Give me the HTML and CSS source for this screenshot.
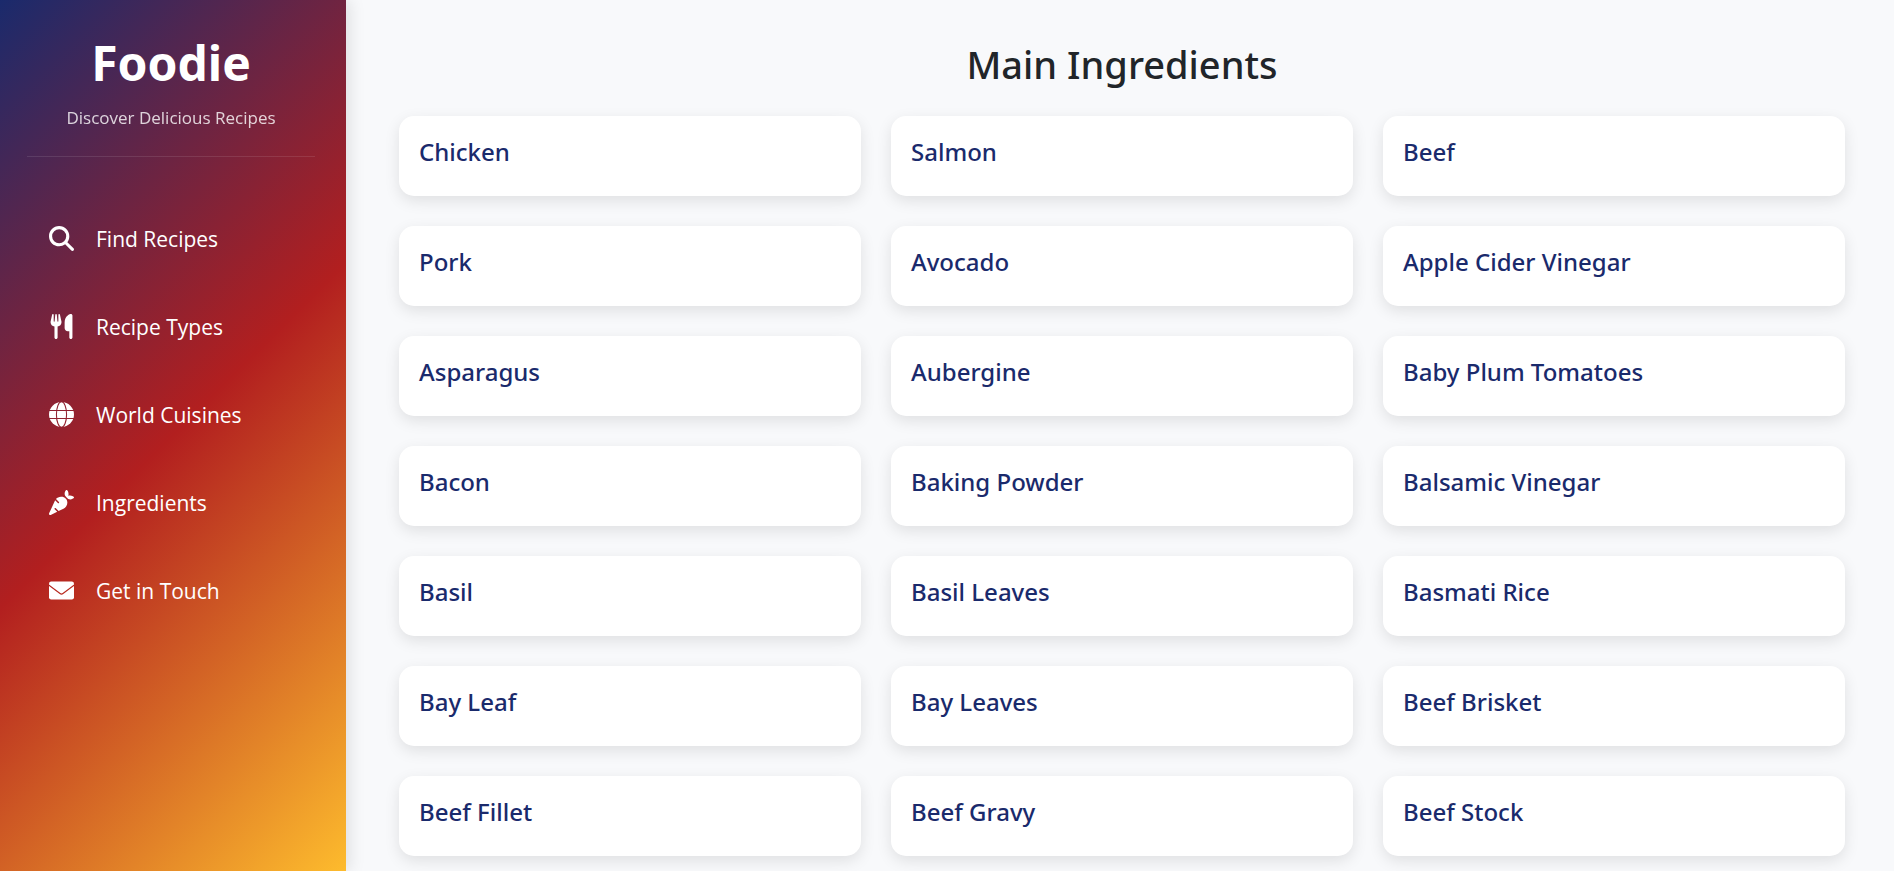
FILE: index.html
```
<!DOCTYPE html>
<html lang="en">
<head>
    <meta charset="UTF-8">
    <meta name="viewport" content="width=device-width, initial-scale=1.0">
    <title>Foodie</title>
    <link rel="stylesheet" href="styles.css">
</head>
<body>
    <aside class="sidebar">
        <div class="sidebar-header">
            <h1>Foodie</h1>
            <p>Discover Delicious Recipes</p>
        </div>
        <nav class="sidebar-nav">
            <a href="#search">
                <svg class="icon" viewBox="0 0 512 512" aria-hidden="true"><path d="M416 208c0 45.9-14.9 88.3-40 122.7L502.6 457.4c12.5 12.5 12.5 32.8 0 45.3s-32.8 12.5-45.3 0L330.7 376c-34.4 25.2-76.8 40-122.7 40C93.1 416 0 322.9 0 208S93.1 0 208 0S416 93.1 416 208zM208 352a144 144 0 1 0 0-288 144 144 0 1 0 0 288z"/></svg>
                <span>Find Recipes</span>
            </a>
            <a href="#categories">
                <svg class="icon" viewBox="0 0 448 512" aria-hidden="true"><path d="M416 0C400 0 288 32 288 176V288c0 35.3 28.7 64 64 64h32V480c0 17.7 14.3 32 32 32s32-14.3 32-32V352 240 32c0-17.7-14.3-32-32-32zM64 16C64 7.8 57.9 1 49.7 .1S34.2 4.6 32.4 12.5L2.1 148.8C.7 155.1 0 161.5 0 167.9c0 45.9 35.1 83.6 80 87.7V480c0 17.7 14.3 32 32 32s32-14.3 32-32V255.6c44.9-4.1 80-41.8 80-87.7c0-6.4-.7-12.8-2.1-19.1L191.6 12.5c-1.8-8-9.3-13.3-17.4-12.4S160 7.8 160 16V150.2c0 5.4-4.4 9.8-9.8 9.8c-5.1 0-9.3-3.9-9.8-9L127.9 14.6C127.2 6.3 120.3 0 112 0s-15.2 6.3-15.9 14.6L83.7 151c-.5 5.1-4.7 9-9.8 9c-5.4 0-9.8-4.4-9.8-9.8V16z"/></svg>
                <span>Recipe Types</span>
            </a>
            <a href="#area">
                <svg class="icon" viewBox="0 0 512 512" aria-hidden="true">
                    <mask id="globe-lines">
                        <rect width="512" height="512" fill="white"/>
                        <g fill="none" stroke="black" stroke-width="22">
                            <path d="M0 174H512M0 338H512"/>
                            <ellipse cx="256" cy="256" rx="104" ry="262"/>
                        </g>
                    </mask>
                    <circle cx="256" cy="256" r="256" mask="url(#globe-lines)"/>
                </svg>
                <span>World Cuisines</span>
            </a>
            <a href="#ingredients">
                <svg class="icon" viewBox="0 0 512 512" aria-hidden="true"><path d="M346.7 6C337.6 17 320 42.3 320 72c0 40 15.3 55.3 40 80s40 40 80 40c29.7 0 55-17.6 66-26.7c4-3.3 6-8.2 6-13.3s-2-10-6-13.2c-11.4-9.1-38.3-26.8-74-26.8c-32 0-40 8-40 8s8-8 8-40c0-35.7-17.7-62.6-26.8-74C370 2 365.1 0 360 0s-10 2-13.3 6zM244.6 136c-40 0-77.1 18.1-101.7 48.2l60.5 60.5c6.2 6.2 6.2 16.4 0 22.6s-16.4 6.2-22.6 0l-55.3-55.3 0 .1L2.2 477.9C-2 487-.1 497.8 7 505s17.9 9 27.1 4.8l134.7-62.4-52.1-52.1c-6.2-6.2-6.2-16.4 0-22.6s16.4-6.2 22.6 0l57.1 57.1 100.4-46.5C342.9 361.9 376 311.3 376 255.4c0-66-53.5-119.4-119.4-119.4h-12z"/></svg>
                <span>Ingredients</span>
            </a>
            <a href="#contact">
                <svg class="icon" viewBox="0 0 512 512" aria-hidden="true">
                    <mask id="envelope-flap">
                        <rect width="512" height="512" fill="white"/>
                        <path d="M-10 142L226 318Q256 340 286 318L522 142" fill="none" stroke="black" stroke-width="24"/>
                    </mask>
                    <rect y="70" width="512" height="372" rx="46" mask="url(#envelope-flap)"/>
                </svg>
                <span>Get in Touch</span>
            </a>
        </nav>
    </aside>

    <main class="content">
        <h2>Main Ingredients</h2>
        <div class="ingredients">
            <div class="card"><h3>Chicken</h3></div>
            <div class="card"><h3>Salmon</h3></div>
            <div class="card"><h3>Beef</h3></div>
            <div class="card"><h3>Pork</h3></div>
            <div class="card"><h3>Avocado</h3></div>
            <div class="card"><h3>Apple Cider Vinegar</h3></div>
            <div class="card"><h3>Asparagus</h3></div>
            <div class="card"><h3>Aubergine</h3></div>
            <div class="card"><h3>Baby Plum Tomatoes</h3></div>
            <div class="card"><h3>Bacon</h3></div>
            <div class="card"><h3>Baking Powder</h3></div>
            <div class="card"><h3>Balsamic Vinegar</h3></div>
            <div class="card"><h3>Basil</h3></div>
            <div class="card"><h3>Basil Leaves</h3></div>
            <div class="card"><h3>Basmati Rice</h3></div>
            <div class="card"><h3>Bay Leaf</h3></div>
            <div class="card"><h3>Bay Leaves</h3></div>
            <div class="card"><h3>Beef Brisket</h3></div>
            <div class="card"><h3>Beef Fillet</h3></div>
            <div class="card"><h3>Beef Gravy</h3></div>
            <div class="card"><h3>Beef Stock</h3></div>
        </div>
    </main>
</body>
</html>
```
FILE: styles.css
```
* {
    box-sizing: border-box;
}

body {
    margin: 0;
    min-height: 100vh;
    display: flex;
    font-family: "Segoe UI", "Noto Sans", "Open Sans", sans-serif;
    background-color: #f8f9fb;
    color: #212529;
}

h1, h2, h3, p {
    margin: 0;
}

.sidebar {
    flex: 0 0 346px;
    padding: 32px 31px 32px 27px;
    background: linear-gradient(135deg, #1a2a6c, #b21f1f, #fdbb2d);
    box-shadow: 4px 0 15px rgba(0, 0, 0, 0.1);
    color: white;
}

.sidebar-header {
    padding-bottom: 24px;
    margin-bottom: 50px;
    text-align: center;
    border-bottom: 1px solid rgba(255, 255, 255, 0.1);
}

.sidebar-header h1 {
    font-size: 48px;
    font-weight: 700;
    line-height: 62px;
    margin-bottom: 10px;
}

.sidebar-header p {
    font-family: "Segoe UI", "Open Sans", sans-serif;
    font-size: 17px;
    line-height: 28px;
    opacity: 0.8;
}

.sidebar-nav a {
    display: flex;
    align-items: center;
    gap: 22px;
    height: 64px;
    margin-bottom: 24px;
    padding: 0 22px;
    color: white;
    font-family: "Segoe UI", "Open Sans", sans-serif;
    font-size: 21px;
    text-decoration: none;
}

.icon {
    width: 25px;
    height: 25px;
    margin-bottom: 2px;
    fill: currentColor;
}

.content {
    flex: 1;
    padding: 40px 49px 0 53px;
}

.content h2 {
    font-size: 38px;
    font-weight: 500;
    line-height: 48px;
    margin-bottom: 28px;
    text-align: center;
}

.ingredients {
    display: grid;
    grid-template-columns: repeat(3, 1fr);
    gap: 30px;
}

.card {
    height: 80px;
    padding: 20px;
    background: white;
    border-radius: 15px;
    box-shadow: 0 5px 15px rgba(0, 0, 0, 0.1);
}

.card h3 {
    font-size: 24px;
    font-weight: 500;
    line-height: 32px;
    color: #1a2a6c;
}
```
